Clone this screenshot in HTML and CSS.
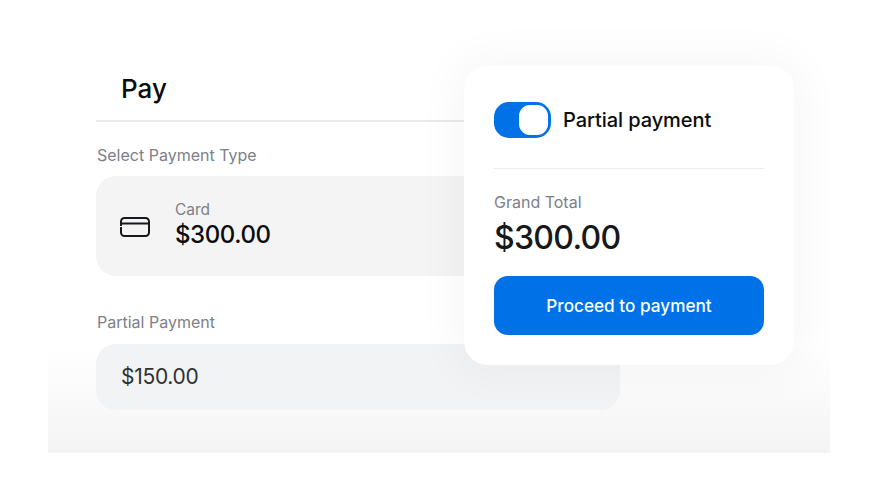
FILE: index.html
```html
<!DOCTYPE html>
<html lang="en">
<head>
    <meta charset="UTF-8">
    <title>Pay</title>
    <link rel="stylesheet" href="styles.css">
</head>
<body>
    <div class="panel">
        <div class="form">
            <h1 class="title">Pay</h1>
            <p class="label label-type">Select Payment Type</p>
            <div class="type-box">
                <svg class="card-icon" width="32" height="22" viewBox="0 0 32 22" fill="none" stroke="#16181a" stroke-width="2">
                    <path d="M2 10V5.500A3.500 3.500 0 0 1 5.500 2H26.500A3.500 3.500 0 0 1 30 5.500V16.500A3.500 3.500 0 0 1 26.500 20H5.500A3.500 3.500 0 0 1 2 16.500V11"/>
                    <path d="M3 7.500H30"/>
                </svg>
                <div class="type-text">
                    <span class="type-name">Card</span>
                    <span class="type-amount">$300.00</span>
                </div>
            </div>
            <p class="label label-partial">Partial Payment</p>
            <div class="amount-box">$150.00</div>
        </div>
        <div class="summary">
            <div class="toggle-row">
                <span class="toggle"><span class="knob"></span></span>
                <span class="toggle-label">Partial payment</span>
            </div>
            <p class="label total-label">Grand Total</p>
            <p class="total">$300.00</p>
            <button class="pay-btn" type="button">Proceed to payment</button>
        </div>
    </div>
</body>
</html>
```

FILE: styles.css
```css
body {
    margin: 0;
    background-color: white;
    font-family: Inter, "Liberation Sans", sans-serif;
    color: #16181a;
}
p, h1 {
    margin: 0;
}
.panel {
    position: relative;
    width: 782px;
    height: 453px;
    margin-left: 48px;
    overflow: hidden;
    background: linear-gradient(to bottom, #fff 0, #fff 345px, #fafafa 395px, #f4f4f5 453px);
}
.form {
    width: 524px;
    margin-left: 48px;
    padding-top: 71px;
}
.title {
    padding: 0 0 13px 25px;
    font-size: 26px;
    line-height: 36px;
    font-weight: 500;
    color: #0b0c0d;
    border-bottom: 2px solid #e9eaeb;
}
.label {
    font-size: 16px;
    line-height: 20px;
    color: #7d8088;
}
.label-type {
    margin-top: 23px;
    padding-left: 1px;
}
.type-box {
    display: flex;
    align-items: center;
    gap: 24px;
    height: 100px;
    margin-top: 11px;
    padding-left: 23px;
    background-color: #f4f4f5;
    border-radius: 20px;
}
.card-icon {
    margin-top: 2px;
}
.type-text {
    display: flex;
    flex-direction: column;
    margin-top: -1px;
}
.type-name {
    font-size: 15.500px;
    line-height: 18px;
    color: #7d8088;
}
.type-amount {
    font-size: 24px;
    line-height: 32px;
    font-weight: 500;
    letter-spacing: -0.4px;
    color: #0b0c0d;
}
.label-partial {
    margin-top: 36px;
    padding-left: 1px;
}
.amount-box {
    height: 66px;
    margin-top: 12px;
    padding-left: 25px;
    background-color: #f2f3f4;
    border-radius: 20px;
    font-size: 21px;
    line-height: 66px;
    letter-spacing: -0.3px;
    color: #2f3133;
}
.summary {
    position: absolute;
    left: 416px;
    top: 66px;
    width: 270px;
    height: 299px;
    padding: 0 30px;
    background-color: white;
    border-radius: 24px;
    box-shadow: 0 0 45px 10px rgba(30, 35, 40, 0.035);
}
.toggle-row {
    display: flex;
    align-items: center;
    gap: 12px;
    height: 103px;
    padding-top: 5px;
    box-sizing: border-box;
    border-bottom: 1px solid #ebecee;
}
.toggle {
    display: flex;
    justify-content: flex-end;
    align-items: center;
    width: 57px;
    height: 36px;
    padding-right: 3px;
    box-sizing: border-box;
    background-color: #0071e6;
    border-radius: 15px;
}
.knob {
    width: 29px;
    height: 30px;
    background-color: white;
    border-radius: 11px;
}
.toggle-label {
    font-size: 20px;
    font-weight: 500;
    letter-spacing: -0.07px;
    color: #0b0c0d;
}
.total-label {
    margin-top: 23px;
}
.total {
    margin-top: 6px;
    font-size: 32px;
    line-height: 40px;
    font-weight: 500;
    letter-spacing: -0.7px;
}
.pay-btn {
    display: block;
    width: 100%;
    height: 59px;
    margin-top: 18px;
    padding: 0;
    background-color: #0071e6;
    color: white;
    border: none;
    border-radius: 14px;
    font-family: inherit;
    font-size: 17.200px;
    font-weight: 500;
}
```
